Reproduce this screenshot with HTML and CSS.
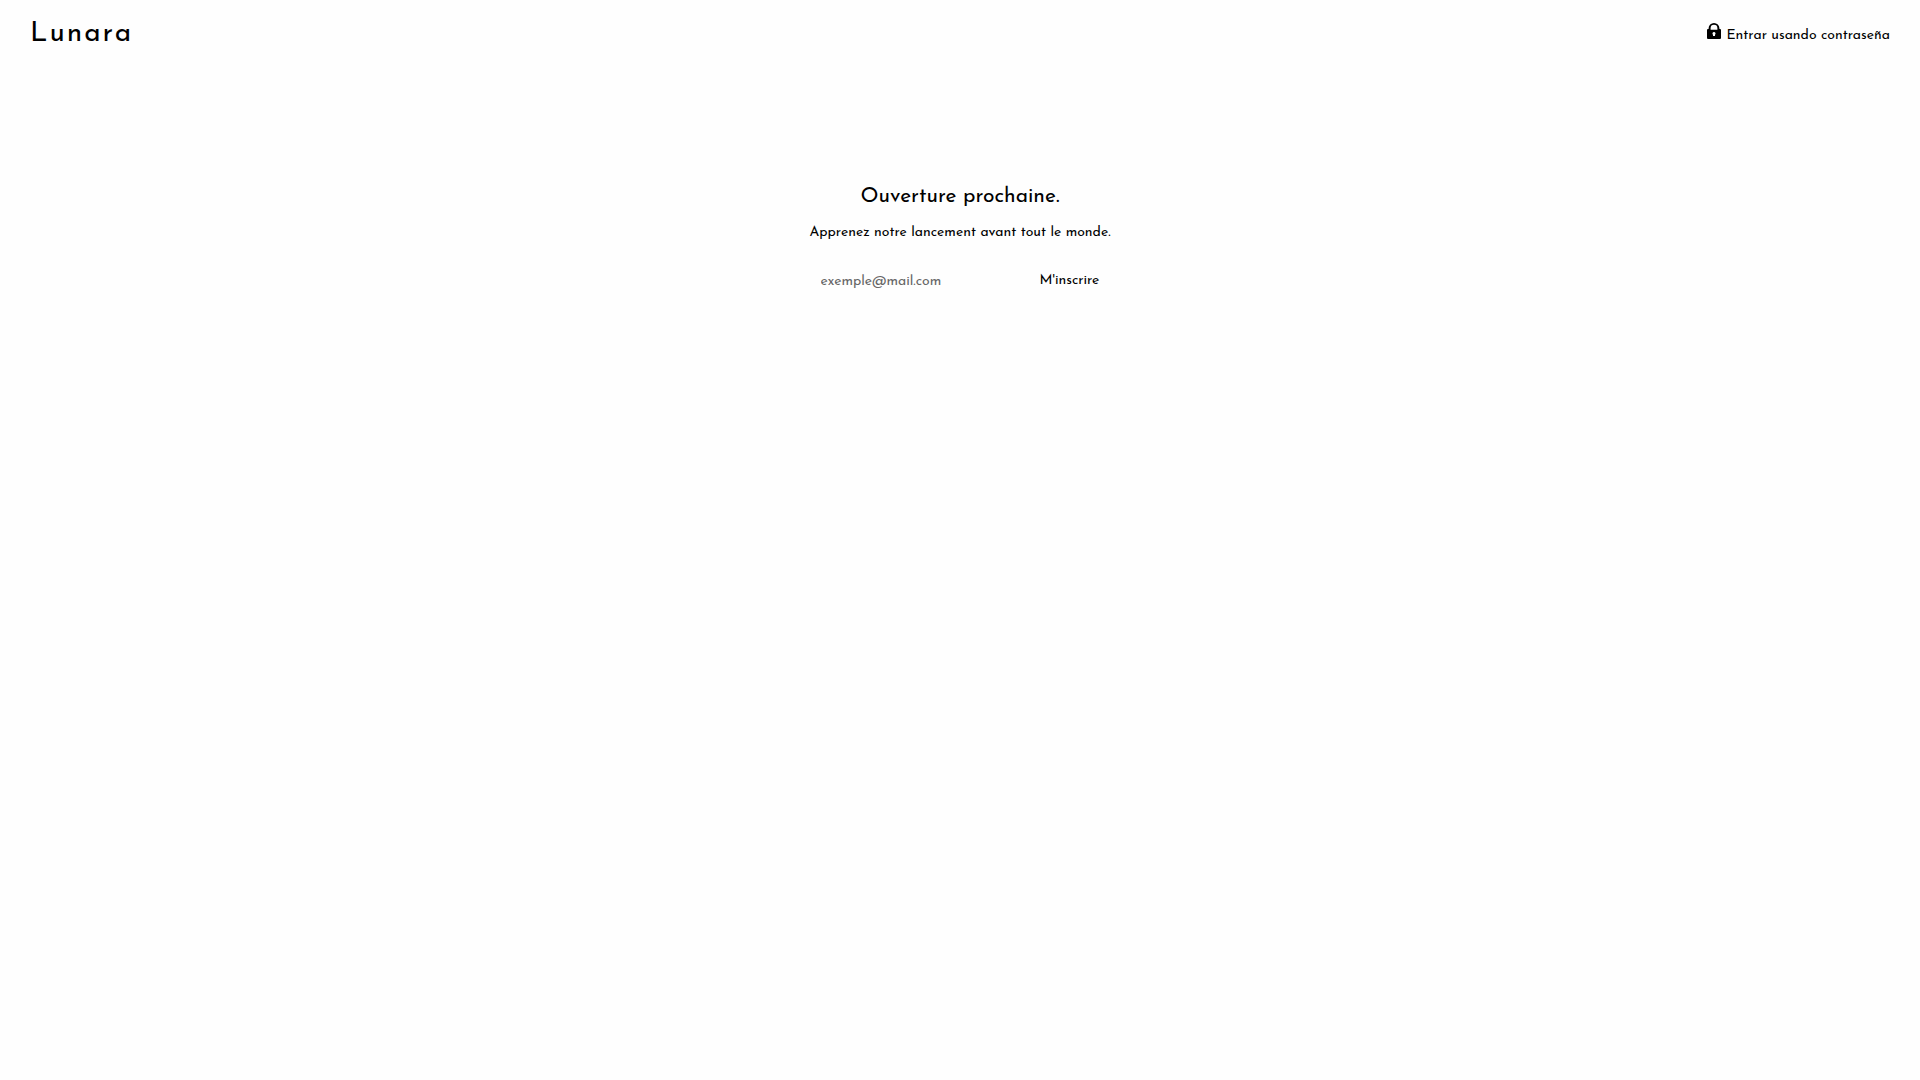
FILE: index.html
```html
<!DOCTYPE html>
<html lang="fr">
<head>
<meta charset="utf-8">
<meta name="viewport" content="width=device-width, initial-scale=1">
<title>Lunara</title>
<link rel="stylesheet" href="styles.css">
</head>
<body>
<header class="header">
  <h1 class="logo">Lunara</h1>
  <a class="login" href="#" lang="es">
    <svg class="lock" viewBox="0 0 14 16" aria-hidden="true"><path fill-rule="evenodd" d="M1.6 6V5.2a5.4 5.2 0 0 1 10.8 0V6H13a1 1 0 0 1 1 1v8a1 1 0 0 1-1 1H1a1 1 0 0 1-1-1V7a1 1 0 0 1 1-1zM3.6 6.8h6.8V5.2a3.4 3.4 0 0 0-6.8 0zM7 9a1.6 1.6 0 0 0-1 2.8V13h2v-1.200A1.6 1.6 0 0 0 7 9z"/></svg>
    <span class="login-text">Entrar usando contraseña</span>
  </a>
</header>
<main class="main">
  <h2 class="title">Ouverture prochaine.</h2>
  <p class="lead">Apprenez notre lancement avant tout le monde.</p>
  <form class="signup">
    <input class="email" type="email" placeholder="exemple@mail.com" aria-label="E-mail">
    <button class="submit" type="submit">M'inscrire</button>
  </form>
</main>
</body>
</html>
```
FILE: styles.css
```css
* {
  box-sizing: border-box;
}

body {
  margin: 0;
  background: #fefefe;
  color: #000;
  font-family: "Josefin Sans", Lato, sans-serif;
  font-size: 14px;
  line-height: 24px;
}

.header {
  display: flex;
  justify-content: space-between;
  align-items: center;
  padding: 14px 30px;
}

.logo {
  margin: 0;
  font-size: 28px;
  font-weight: 400;
  line-height: 40px;
  letter-spacing: 2px;
}

.login {
  display: flex;
  align-items: flex-start;
  gap: 5px;
  color: inherit;
  text-decoration: none;
}

.lock {
  width: 14px;
  height: 16px;
  margin-top: 1px;
}

.login-text {
  padding-top: 4px;
  line-height: 20px;
}

.main {
  display: flex;
  flex-direction: column;
  align-items: center;
  padding: 114px 16px 0;
  text-align: center;
}

.title {
  margin: 0 0 9px;
  font-size: 21px;
  font-weight: 400;
  line-height: 30px;
}

.lead {
  margin: 0 0 18px;
}

.signup {
  display: flex;
  align-items: center;
}

.email,
.submit {
  height: 36px;
  margin: 0;
  border: 0;
  padding: 0 10px;
  background: transparent;
  color: inherit;
  font: inherit;
}

.email {
  width: 219px;
}

.email::placeholder {
  color: #666;
  opacity: 1;
}

.submit {
  cursor: pointer;
}
```
